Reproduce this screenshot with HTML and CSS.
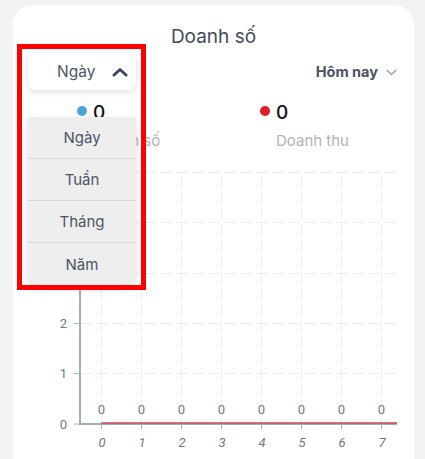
FILE: index.html
```html
<!DOCTYPE html>
<html lang="vi">
<head>
<meta charset="utf-8">
<link rel="stylesheet" href="styles.css">
</head>
<body>
<div class="card">
  <h2 class="title">Doanh số</h2>
  <div class="controls">
    <div class="period">
      <button class="period-btn">
        <span class="period-label">Ngày</span>
        <svg class="chev-up" width="16" height="10" viewBox="0 0 16 10"><path d="M2 8 L8 2.5 L14 8" fill="none" stroke="#3b4759" stroke-width="3" stroke-linecap="round" stroke-linejoin="round"/></svg>
      </button>
      <ul class="menu">
        <li class="menu-item">Ngày</li>
        <li class="menu-item">Tuần</li>
        <li class="menu-item">Tháng</li>
        <li class="menu-item">Năm</li>
      </ul>
    </div>
    <div class="range">
      <span>Hôm nay</span>
      <svg class="chev-down" width="11" height="7" viewBox="0 0 11 7"><path d="M1 1.2 L5.5 5.5 L10 1.2" fill="none" stroke="#9aa3ae" stroke-width="1.4" stroke-linecap="round" stroke-linejoin="round"/></svg>
    </div>
  </div>
  <div class="stats">
    <div class="stat stat-sales">
      <span class="dot dot-blue"></span>
      <div class="stat-text">
        <div class="stat-value">0</div>
        <div class="stat-label">Doanh số</div>
      </div>
    </div>
    <div class="stat stat-revenue">
      <span class="dot dot-red"></span>
      <div class="stat-text">
        <div class="stat-value">0</div>
        <div class="stat-label">Doanh thu</div>
      </div>
    </div>
  </div>
  <svg class="chart" width="401" height="300" viewBox="13 160 401 300">
    <g class="grid" stroke="#eceff2" stroke-width="1" stroke-dasharray="12 4" fill="none">
      <line x1="80" y1="172.5" x2="397" y2="172.5"/>
      <line x1="80" y1="222.5" x2="397" y2="222.5"/>
      <line x1="80" y1="273.5" x2="397" y2="273.5"/>
      <line x1="80" y1="323.5" x2="397" y2="323.5"/>
      <line x1="80" y1="373.5" x2="397" y2="373.5"/>
      <line x1="101.5" y1="176" x2="101.5" y2="424"/>
      <line x1="141.5" y1="176" x2="141.5" y2="424"/>
      <line x1="181.5" y1="176" x2="181.5" y2="424"/>
      <line x1="221.5" y1="176" x2="221.5" y2="424"/>
      <line x1="261.5" y1="176" x2="261.5" y2="424"/>
      <line x1="301.5" y1="176" x2="301.5" y2="424"/>
      <line x1="341.5" y1="176" x2="341.5" y2="424"/>
      <line x1="381.5" y1="176" x2="381.5" y2="424"/>
    </g>
    <g class="ticks" stroke="#a3b2bd" stroke-width="1">
      <line x1="74" y1="323.5" x2="80" y2="323.5"/>
      <line x1="74" y1="373.5" x2="80" y2="373.5"/>
      <line x1="74" y1="424" x2="80" y2="424"/>
      <line x1="101.5" y1="424" x2="101.5" y2="429"/>
      <line x1="141.5" y1="424" x2="141.5" y2="429"/>
      <line x1="181.5" y1="424" x2="181.5" y2="429"/>
      <line x1="221.5" y1="424" x2="221.5" y2="429"/>
      <line x1="261.5" y1="424" x2="261.5" y2="429"/>
      <line x1="301.5" y1="424" x2="301.5" y2="429"/>
      <line x1="341.5" y1="424" x2="341.5" y2="429"/>
      <line x1="381.5" y1="424" x2="381.5" y2="429"/>
    </g>
    <g class="axes" stroke="#9fb0bc" stroke-width="2" fill="none">
      <line x1="80" y1="172" x2="80" y2="425"/>
      <line x1="79" y1="424" x2="397" y2="424"/>
    </g>
    <line x1="101.5" y1="423.5" x2="397" y2="423.5" stroke="#7fa8d0" stroke-width="1.5"/>
    <line x1="101.5" y1="423" x2="397" y2="423" stroke="#e0474f" stroke-width="1.4"/>
    <g class="ylabels">
      <text x="67" y="328" text-anchor="end">2</text>
      <text x="67" y="378" text-anchor="end">1</text>
      <text x="67" y="429" text-anchor="end">0</text>
    </g>
    <g class="vlabels">
      <text x="101.5" y="414" text-anchor="middle">0</text>
      <text x="141.5" y="414" text-anchor="middle">0</text>
      <text x="181.5" y="414" text-anchor="middle">0</text>
      <text x="221.5" y="414" text-anchor="middle">0</text>
      <text x="261.5" y="414" text-anchor="middle">0</text>
      <text x="301.5" y="414" text-anchor="middle">0</text>
      <text x="341.5" y="414" text-anchor="middle">0</text>
      <text x="381.5" y="414" text-anchor="middle">0</text>
    </g>
    <g class="xlabels">
      <text x="102" y="447" text-anchor="middle">0</text>
      <text x="142" y="447" text-anchor="middle">1</text>
      <text x="182" y="447" text-anchor="middle">2</text>
      <text x="222" y="447" text-anchor="middle">3</text>
      <text x="262" y="447" text-anchor="middle">4</text>
      <text x="302" y="447" text-anchor="middle">5</text>
      <text x="342" y="447" text-anchor="middle">6</text>
      <text x="382" y="447" text-anchor="middle">7</text>
    </g>
  </svg>
  <div class="highlight"></div>
</div>
</body>
</html>
```

FILE: styles.css
```css
* { box-sizing: border-box; }

html, body {
  margin: 0;
  padding: 0;
  background: #f2f3f5;
  overflow: hidden;
}

body {
  font-family: Inter, "Noto Sans", "Liberation Sans", sans-serif;
  padding: 5px 0 0 13px;
  height: 459px;
}

.card {
  position: relative;
  width: 401px;
  height: 520px;
  background: #ffffff;
  border-radius: 20px;
  padding-top: 20px;
}

.title {
  margin: 0;
  text-align: center;
  font-size: 19px;
  line-height: 24px;
  font-weight: 400;
  color: #3e4a5b;
}

.controls {
  margin-top: 4px;
  display: flex;
  align-items: center;
  justify-content: space-between;
  padding: 0 17px 0 15px;
}

.period {
  position: relative;
  z-index: 2;
}

.period-btn {
  width: 108px;
  height: 37px;
  border: none;
  border-radius: 8px;
  background: #ffffff;
  box-shadow: 0 2px 7px rgba(0, 0, 0, 0.13);
  display: flex;
  align-items: center;
  padding: 0 8px 0 29px;
  font-family: inherit;
  cursor: pointer;
}

.period-label {
  font-size: 15.5px;
  color: #4b5566;
  flex: 1;
  text-align: left;
}

.chev-up { display: block; }

.menu {
  position: absolute;
  top: 64px;
  left: 0;
  width: 108px;
  margin: 0;
  padding: 0;
  list-style: none;
  background: #eeeeee;
  border-radius: 0 0 10px 10px;
  box-shadow: 0 4px 10px rgba(0, 0, 0, 0.12);
  overflow: hidden;
}

.menu-item {
  height: 42px;
  display: flex;
  align-items: center;
  justify-content: center;
  font-size: 15px;
  color: #4b5566;
  border-bottom: 1.5px solid #d9d9d9;
}

.menu-item:last-child { border-bottom: none; }

.range {
  display: flex;
  align-items: center;
  gap: 8px;
  font-size: 14.5px;
  font-weight: 700;
  color: #4a5364;
}

.chev-down { display: block; margin-top: 1px; }

.stats {
  margin-top: 12px;
  display: flex;
}

.stat {
  display: flex;
  align-items: flex-start;
}

.stat-sales { margin-left: 64px; width: 183px; }

.dot {
  width: 10px;
  height: 10px;
  border-radius: 50%;
  margin-top: 4px;
  margin-right: 6px;
}

.dot-blue { background: #4ea5de; }
.dot-red { background: #e31b23; }

.stat-value {
  font-size: 19px;
  line-height: 22px;
  color: #111111;
  font-weight: 500;
}

.stat-label {
  margin-top: 7px;
  font-size: 15px;
  line-height: 20px;
  color: #b3b3b3;
}

.chart {
  display: block;
  margin-top: 9px;
  font-family: Roboto, "Liberation Sans", sans-serif;
}

.ylabels text, .vlabels text {
  font-size: 13px;
  fill: #6d7781;
}

.xlabels text {
  font-size: 13px;
  font-style: italic;
  fill: #6d7781;
}

.highlight {
  position: absolute;
  left: 4px;
  top: 39px;
  width: 129px;
  height: 246px;
  border: 5px solid #ff0000;
  z-index: 3;
  pointer-events: none;
}
```
